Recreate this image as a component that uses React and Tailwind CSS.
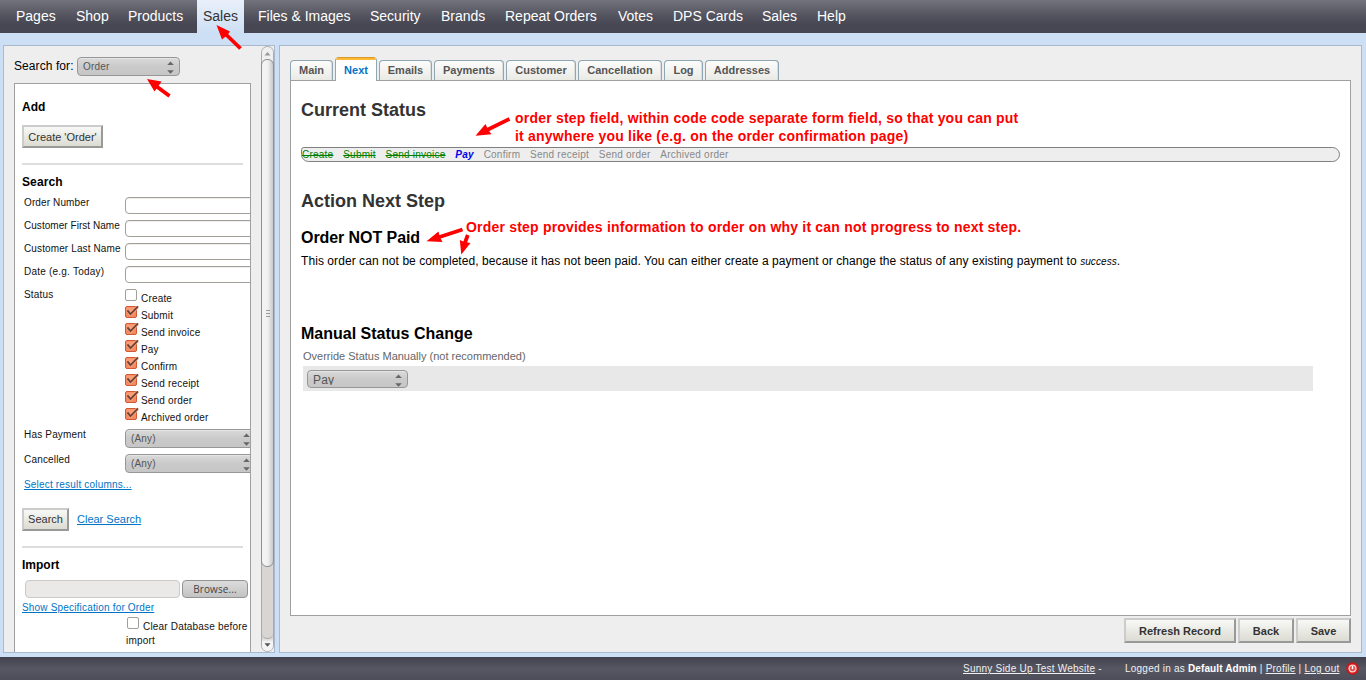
import React from "react";

const NAV = [
  ["Pages", "w-[52px]"],
  ["Shop", "w-[44px]"],
  ["Products", "w-[67px]"],
  ["Sales", "w-[47px]", true],
  ["Files & Images", "w-[104px]"],
  ["Security", "w-[63px]"],
  ["Brands", "w-[56px]"],
  ["Repeat Orders", "w-[105px]"],
  ["Votes", "w-[47px]"],
  ["DPS Cards", "w-[81px]"],
  ["Sales", "w-[47px]"],
  ["Help", "w-[45px]"],
];

const TABS = [
  ["Main", "w-[43px]"],
  ["Next", "w-[42px]", true],
  ["Emails", "w-[53px]"],
  ["Payments", "w-[70px]"],
  ["Customer", "w-[70px]"],
  ["Cancellation", "w-[84px]"],
  ["Log", "w-[39px]"],
  ["Addresses", "w-[74px]"],
];

const STATUSES = ["Create", "Submit", "Send invoice", "Pay", "Confirm", "Send receipt", "Send order", "Archived order"];

function Updown() {
  return (
    <svg className="block shrink-0" width="7" height="13" viewBox="0 0 7 13">
      <path d="M3.5 .4L6.8 4H.2z M3.5 12.8L6.8 9.2H.2z" fill="#666" />
    </svg>
  );
}

function Select({ children, className, text }) {
  return (
    <div
      className={`flex shrink-0 justify-between overflow-hidden rounded-[4px] border border-[#979797] bg-linear-to-b from-[#dadada] via-[#cacaca] via-50% to-[#c6c6c6] pl-[5px] text-[#555] shadow-[inset_0_1px_0_#e4e4e4] ${className}`}
    >
      <span className={text}>{children}</span>
      <div className="mr-[5px] mt-[3px]">
        <Updown />
      </div>
    </div>
  );
}

function Check({ on }) {
  if (!on) return <span className="block h-[12px] w-[12px] shrink-0 rounded-[2px] border border-[#a29e98] bg-white" />;
  return (
    <svg className="block shrink-0 overflow-visible" width="12" height="12" viewBox="0 0 12 12">
      <rect x=".5" y=".5" width="11" height="11" rx="1.5" fill="#f58a60" stroke="#cf5a33" />
      <path d="M1.5 1.5h9v4h-9z" fill="#fa9c76" />
      <path d="M2.6 4.6L5.6 8.2L12.6 .8" fill="none" stroke="#fbb090" strokeWidth="3.2" />
      <path d="M2.4 4.4L5.5 8.1L13 .4" fill="none" stroke="#754232" strokeWidth="2" />
    </svg>
  );
}

function Button({ children, className }) {
  return (
    <button
      className={`flex shrink-0 items-center justify-center border-2 border-b-[#999] border-l-[#ccc] border-r-[#999] border-t-[#ccc] bg-linear-to-b from-[#f8f8f6] to-[#dcdcd3] text-[11px] tracking-normal whitespace-nowrap text-[#333] ${className}`}
    >
      {children}
    </button>
  );
}

function Field({ label, spacing }) {
  return (
    <div className="flex h-[23px] pl-[2px]">
      <span className={`w-[101px] shrink-0 leading-[11px] ${spacing}`}>{label}</span>
      <span className="h-[17px] w-[150px] shrink-0 rounded-[4px] border border-[#a39f98] bg-white shadow-[inset_0_1px_0_#eee]" />
    </div>
  );
}

function Sidebar() {
  return (
    <aside className="flex h-[608px] w-[272px] shrink-0 overflow-hidden border border-[#a9bace] bg-[#eee]">
      <div className="flex w-[257px] shrink-0 flex-col pl-[10px]">
        <div className="flex h-[37px] shrink-0 pt-[11px]">
          <span className="w-[63px] shrink-0 text-[12px] leading-[18px] tracking-[0.08px]">Search for:</span>
          <Select className="h-[19px] w-[103px]" text="text-[10px] leading-[17px] tracking-[0.2px]">Order</Select>
        </div>
        <div className="flex w-[237px] grow flex-col overflow-hidden border border-b-0 border-[#a0a0a0] bg-white pl-[7px] text-[10px] tracking-[0.18px] whitespace-nowrap text-[#111]">
          <h3 className="mt-[15px] text-[12px] leading-[16px] font-bold tracking-normal text-black">Add</h3>
          <Button className="mt-[10px] h-[23px] w-[81px] pt-px">Create 'Order'</Button>
          <div className="mt-[15px] h-[2px] w-[221px] shrink-0 bg-[#ddd]" />
          <h3 className="mt-[9px] mb-[7px] text-[12px] leading-[16px] font-bold tracking-[0.1px] text-black">Search</h3>
          <Field label="Order Number" spacing="tracking-[0.12px]" />
          <Field label="Customer First Name" spacing="tracking-[0.04px]" />
          <Field label="Customer Last Name" spacing="tracking-[0.12px]" />
          <Field label="Date (e.g. Today)" spacing="tracking-[0.22px]" />
          <div className="flex h-[140px] pl-[2px]">
            <span className="w-[101px] shrink-0 leading-[11px]">Status</span>
            <div>
              {STATUSES.map((s, i) => (
                <div key={s} className="flex h-[17px]">
                  <Check on={i > 0} />
                  <span className="ml-[4px] pt-[4px] leading-[11px]">{s}</span>
                </div>
              ))}
            </div>
          </div>
          {["Has Payment", "Cancelled"].map((l) => (
            <div key={l} className="flex h-[25px] pl-[2px]">
              <span className="w-[101px] shrink-0 leading-[11px]">{l}</span>
              <Select className="h-[19px] w-[131px]" text="leading-[17px]">(Any)</Select>
            </div>
          ))}
          <a className="h-[11px] self-start ml-[2px] leading-[11px] text-[#0074c6] underline">Select result columns...</a>
          <div className="mt-[18px] flex">
            <Button className="h-[23px] w-[47px]">Search</Button>
            <a className="ml-[8px] text-[11px] leading-[22px] tracking-normal text-[#0074c6] underline">Clear Search</a>
          </div>
          <div className="mt-[15px] h-[2px] w-[221px] shrink-0 bg-[#ddd]" />
          <h3 className="mt-[9px] text-[12px] leading-[16px] font-bold tracking-normal text-black">Import</h3>
          <div className="mt-[7px] flex pl-[3px]">
            <span className="mr-[2px] h-[18px] w-[155px] rounded-[4px] border border-[#cdc9c6] bg-[#ebe9e7]" />
            <button className="h-[18px] w-[66px] rounded-[4px] border border-[#939393] bg-linear-to-b from-[#dcdcdc] to-[#c3c3c3] font-['Open_Sans',sans-serif] text-[10px] leading-[16px] tracking-[0.1px] text-[#444]">
              Browse...
            </button>
          </div>
          <a className="mt-[4px] leading-[12px] text-[#0074c6] underline">Show Specification for Order</a>
          <div className="mt-[3px] flex pl-[105px]">
            <Check />
            <span className="ml-[4px] pt-[3px] leading-[13px]">Clear Database before</span>
          </div>
          <span className="pl-[104px] leading-[16px]">import</span>
        </div>
      </div>
      <div className="flex h-[606px] w-[13px] flex-col rounded-[7px] border border-[#aaa] bg-[#d9d5d2]">
        <div className="flex h-[20px] shrink-0 justify-center rounded-t-[6px] bg-[#efefef] pt-[5px]">
          <svg width="7" height="4" viewBox="0 0 7 4"><path d="M3.5 0L6.5 3.5H.5z" fill="#999" /></svg>
        </div>
        <div className="mx-[-1px] mt-[-8px] flex h-[508px] shrink-0 flex-col items-center justify-center gap-[2px] rounded-[6px] border border-[#8f8f8f] bg-linear-to-r from-[#f4f4f4] via-[#f1f1f1] to-[#c9c9c9]">
          <span className="h-px w-[4px] bg-[#999]" />
          <span className="h-px w-[4px] bg-[#999]" />
          <span className="h-px w-[4px] bg-[#999]" />
        </div>
        <div className="z-10 h-[72px] shrink-0 rounded-b-[6px] border-b border-[#aaa]" />
        <div className="mt-[-6px] flex grow items-end justify-center rounded-b-[6px] bg-linear-to-b from-transparent from-30% to-[#f4f4f4] to-50% pb-[4px]">
          <svg width="7" height="4" viewBox="0 0 7 4"><path d="M3.5 3.7L6.5 .3H.5z" fill="#555" /></svg>
        </div>
      </div>
    </aside>
  );
}

function Main() {
  return (
    <main className="flex h-[608px] w-[1083px] shrink-0 flex-col border border-[#a9bace] bg-[#eee] pl-[10px]">
      <div className="z-10 mb-[-1px] flex h-[35px] shrink-0 items-end gap-[2px]">
        {TABS.map(([t, w, on]) =>
          on ? (
            <div key={t} className={`flex h-[24px] flex-col items-center overflow-hidden rounded-t-[4px] border border-y-0 border-[#8fa7b4] bg-white text-[11px] leading-[20px] font-bold text-[#0074c6] ${w}`}>
              <span className="h-[3px] w-full shrink-0 border-t border-[#d99a2b] bg-[#fdb933]" />
              {t}
            </div>
          ) : (
            <div key={t} className={`flex h-[21px] justify-center rounded-t-[4px] border border-[#8fa7b4] border-b-[#a0a0a0] bg-linear-to-b from-[#fcfcfb] to-[#eaeae5] text-[11px] leading-[19px] font-bold text-[#555] shadow-[inset_-1px_0_0_#ddd] ${w}`}>
              {t}
            </div>
          )
        )}
      </div>
      <section className="h-[536px] w-[1061px] shrink-0 border border-[#a0a0a0] bg-white pl-[10px] text-black">
        <h1 className="mt-[18px] text-[18px] leading-[22px] font-bold text-[#333]">Current Status</h1>
        <div className="mt-[26px] flex h-[15px] w-[1039px] gap-[9.8px] rounded-[8px] rounded-tl-[3px] border border-[#808080] bg-[#eee] text-[10px] leading-[13px] tracking-[0.23px] text-[#888]">
          <s className="text-[#008000]">Create</s>
          <s className="text-[#008000]">Submit</s>
          <s className="text-[#008000]">Send invoice</s>
          <b className="text-[#0000f0] italic">Pay</b>
          <span>Confirm</span>
          <span>Send receipt</span>
          <span>Send order</span>
          <span>Archived order</span>
        </div>
        <h1 className="mt-[28px] text-[18px] leading-[22px] font-bold text-[#333]">Action Next Step</h1>
        <h2 className="mt-[16px] text-[16px] leading-[20px] font-bold tracking-[-0.07px]">Order NOT Paid</h2>
        <p className="mt-[4px] text-[12px] leading-[18px] tracking-[0.07px]">
          This order can not be completed, because it has not been paid. You can either create a payment or change the status of any existing payment to{" "}
          <em className="text-[10px]">success</em>.
        </p>
        <h2 className="mt-[53px] text-[16px] leading-[20px] font-bold">Manual Status Change</h2>
        <p className="mt-[5px] pl-[2px] text-[11px] leading-[14px] text-[#666]">Override Status Manually (not recommended)</p>
        <div className="mt-[3px] ml-[2px] flex h-[25px] w-[1010px] bg-[#e8e8e8] pt-[4px] pl-[4px]">
          <Select className="h-[18px] w-[101px]" text="text-[12px] leading-[18px] tracking-[0.2px] h-[14px] overflow-hidden">Pay</Select>
        </div>
      </section>
      <div className="mt-[2px] mr-[10px] flex justify-end gap-[2px]">
        <Button className="h-[25px] w-[112px] pt-px font-bold">Refresh Record</Button>
        <Button className="h-[25px] w-[56px] pt-px font-bold">Back</Button>
        <Button className="h-[25px] w-[55px] pt-px font-bold">Save</Button>
      </div>
    </main>
  );
}

function Notes() {
  return (
    <>
      <p className="absolute top-[109px] left-[515px] z-20 text-[14px] leading-[18px] font-bold tracking-[0.21px] whitespace-nowrap text-[#f00]">
        order step field, within code code separate form field, so that you can put
        <br />
        it anywhere you like (e.g. on the order confirmation page)
      </p>
      <p className="absolute top-[218px] left-[466px] z-20 text-[14px] leading-[18px] font-bold tracking-[0.2px] whitespace-nowrap text-[#f00]">
        Order step provides information to order on why it can not progress to next step.
      </p>
      <svg className="pointer-events-none absolute top-0 left-0 z-20" width="600" height="270" viewBox="0 0 600 270" stroke="#f00" strokeWidth="3.8" fill="#f00">
        <path d="M240.500 48.500L224 32.500M169.500 96L156 86M509.500 119L486 130.500M462.500 229.500L438 237.500M467.800 235L464.500 244" />
        <path
          stroke="none"
          d="M216.5 25L230 31.500L227.500 35L222 39.500z M147 79L161.500 81.500L158.500 86L154.500 91.500z M475.500 135.700L485.500 124L488 129.500L491.500 134.200z M426.500 241.300L438.500 231.500L440 237.500L442.500 242z M461.300 254.500L459.800 240L464.500 242L470.500 243z"
        />
      </svg>
    </>
  );
}

export default function App() {
  return (
    <div className="relative flex h-[680px] w-[1366px] flex-col overflow-hidden bg-[#cddff4] font-['Liberation_Sans',Arial,sans-serif] text-black">
      <nav className="flex h-[33px] shrink-0 gap-[8px] bg-linear-to-b from-[#73737d] from-0% via-[#51525d] via-50% to-[#464753] to-75% pl-[10px] text-[14px] leading-[32px] whitespace-nowrap text-white">
        {NAV.map(([t, w, on], i) => (
          <a key={i} className={`${w} shrink-0 pl-[6px] ${on ? "bg-linear-to-b from-[#e9f0fa] to-[#cddff4] text-[#333]" : ""}`}>
            {t}
          </a>
        ))}
      </nav>
      <div className="flex h-[624px] shrink-0 gap-[4px] pt-[12px] pl-[3px]">
        <Sidebar />
        <Main />
      </div>
      <footer className="flex h-[23px] items-center bg-linear-to-b from-[#41424c] via-[#565763] via-50% to-[#4c4d59] pl-[963px] text-[10px] tracking-[0.23px] whitespace-nowrap text-[#f0f0f0]">
        <span className="w-[162px] shrink-0"><u>Sunny Side Up Test Website</u> -</span>
        <span className="w-[221px] shrink-0">
          Logged in as <b className="tracking-[0.1px] text-white">Default Admin</b> | <u>Profile</u> | <u>Log out</u>
        </span>
        <svg className="shrink-0" width="13" height="13" viewBox="0 0 13 13">
          <circle cx="6.500" cy="6.500" r="6" fill="#d81818" stroke="#c01515" strokeWidth=".5" />
          <circle cx="6.500" cy="6.500" r="3.400" fill="#e45050" stroke="#f6d0d0" strokeWidth="1.400" />
          <path d="M6.500 4v3.200" stroke="#fff" strokeWidth="1.400" />
        </svg>
      </footer>
      <Notes />
    </div>
  );
}
